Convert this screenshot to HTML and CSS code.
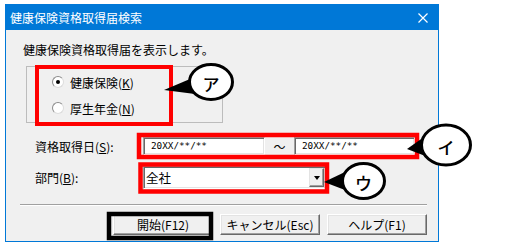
FILE: index.html
```html
<!DOCTYPE html>
<html lang="ja">
<head>
    <meta charset="UTF-8">
    <title>健康保険資格取得届検索</title>
    <link rel="stylesheet" href="styles.css">
</head>
<body>

<div class="window">
    <div class="titlebar">
        <span>健康保険資格取得届検索</span>
        <svg class="close" width="10" height="10" viewBox="0 0 10 10">
            <path d="M0.5 0.5 L9.5 9.5 M9.5 0.5 L0.5 9.5" stroke="#fff" stroke-width="1.2"/>
        </svg>
    </div>

    <div class="content">
        <p class="intro">健康保険資格取得届を表示します。</p>

        <div class="group">
            <label class="radio-row">
                <span class="radio checked"></span>
                <span>健康保険(<u>K</u>)</span>
            </label>
            <label class="radio-row">
                <span class="radio"></span>
                <span>厚生年金(<u>N</u>)</span>
            </label>
        </div>

        <div class="field-row date-row">
            <span class="field-label">資格取得日(<u>S</u>):</span>
            <div class="textbox date-from">20XX/**/**</div>
            <span class="tilde">～</span>
            <div class="textbox date-to">20XX/**/**</div>
        </div>

        <div class="field-row combo-row">
            <span class="field-label">部門(<u>B</u>):</span>
            <div class="combo">
                <span class="combo-text">全社</span>
                <span class="combo-btn"><span class="arrow"></span></span>
            </div>
        </div>

        <div class="separator"></div>

        <div class="buttons">
            <button class="btn">開始(F12)</button>
            <button class="btn">キャンセル(Esc)</button>
            <button class="btn">ヘルプ(F1)</button>
        </div>
    </div>
</div>

<!-- annotations drawn over the dialog -->
<svg class="annot" width="516" height="251" viewBox="0 0 516 251">
    <rect x="37" y="67" width="134" height="57" fill="none" stroke="#ff0000" stroke-width="4"/>
    <rect x="139" y="135" width="278" height="22" fill="none" stroke="#ff0000" stroke-width="4.5"/>
    <rect x="140.5" y="164.5" width="186.5" height="27" fill="none" stroke="#ff0000" stroke-width="4.5"/>
    <rect x="109" y="214" width="102" height="24" fill="none" stroke="#000" stroke-width="4.5"/>

    <g class="callout">
        <polygon points="164,90 190,79 195,94" fill="#000"/>
        <ellipse cx="211" cy="82" rx="21.5" ry="17.5" fill="#fff" stroke="#000" stroke-width="3"/>
        <text x="211" y="83">ア</text>
    </g>
    <g class="callout">
        <polygon points="407,149 424,137 428,157" fill="#000"/>
        <ellipse cx="446" cy="145" rx="24.5" ry="20" fill="#fff" stroke="#000" stroke-width="3"/>
        <text x="446" y="146">イ</text>
    </g>
    <g class="callout">
        <polygon points="324,182 345,172 345,190" fill="#000"/>
        <ellipse cx="363.5" cy="181" rx="21" ry="17.5" fill="#fff" stroke="#000" stroke-width="3"/>
        <text x="363.5" y="182">ウ</text>
    </g>
</svg>

</body>
</html>
```

FILE: styles.css
```css
body {
    margin: 0;
    background-color: #fff;
    font-family: "Noto Sans CJK JP", "Noto Sans", sans-serif;
    font-size: 12px;
    color: #000;
}
.window {
    margin: 4px 0 0 5px;
    width: 434px;
    height: 238px;
    box-sizing: border-box;
    border: 1px solid #0078d7;
    background-color: #f0f0f0;
}
.titlebar {
    height: 25px;
    padding: 0 10px 0 4px;
    display: flex;
    align-items: center;
    justify-content: space-between;
    background-color: #0078d7;
    color: #fff;
    font-size: 12px;
}
.content {
    padding-top: 12px;
}
.intro {
    margin: 0 0 0 17px;
    line-height: 16px;
}
.group {
    margin: 8px 0 0 20px;
    width: 197px;
    height: 57px;
    box-sizing: border-box;
    padding: 2px 0 0 25px;
    border: 1px solid #bcbcbc;
}
.radio-row {
    height: 26px;
    display: flex;
    align-items: center;
    gap: 6px;
}
.radio {
    width: 12px;
    height: 12px;
    box-sizing: border-box;
    border-radius: 50%;
    border: 1px solid #8c8c8c;
    border-right-color: #dcdcdc;
    border-bottom-color: #dcdcdc;
    background-color: #fff;
    position: relative;
}
.radio.checked::after {
    content: "";
    position: absolute;
    left: 3px;
    top: 3px;
    width: 4px;
    height: 4px;
    border-radius: 50%;
    background-color: #000;
}
.field-row {
    display: flex;
    align-items: center;
    margin-left: 29px;
}
.field-label {
    width: 108px;
}
.date-row {
    margin-top: 14px;
    height: 18px;
}
.textbox {
    height: 18px;
    box-sizing: border-box;
    padding-left: 7px;
    border: 1px solid;
    border-color: #a0a0a0 #fff #fff #a0a0a0;
    box-shadow: inset 1px 1px #696969, inset -1px -1px #e3e3e3;
    background-color: #fff;
    font-family: "DejaVu Sans Mono", monospace;
    font-size: 9.3px;
    line-height: 16px;
}
.date-from {
    width: 122px;
}
.date-to {
    width: 121px;
}
.tilde {
    width: 29px;
    text-align: center;
}
.combo-row {
    margin-top: 11px;
}
.combo {
    width: 183px;
    height: 23px;
    box-sizing: border-box;
    display: flex;
    align-items: center;
    padding: 1px;
    border: 1px solid;
    border-color: #a0a0a0 #fff #fff #a0a0a0;
    box-shadow: inset 1px 1px #696969, inset -1px -1px #e3e3e3;
    background-color: #fff;
}
.combo-text {
    flex: 1;
    padding-left: 1px;
    font-size: 12.5px;
}
.combo-btn {
    width: 15px;
    height: 19px;
    box-sizing: border-box;
    display: flex;
    align-items: center;
    justify-content: center;
    background-color: #f0f0f0;
    border: 1px solid;
    border-color: #e3e3e3 #696969 #696969 #e3e3e3;
    box-shadow: inset -1px -1px #a0a0a0;
}
.arrow {
    width: 0;
    height: 0;
    border-left: 3.5px solid transparent;
    border-right: 3.5px solid transparent;
    border-top: 4px solid #000;
}
.separator {
    margin: 15px 0 0 14px;
    width: 407px;
    border-top: 1px solid #a0a0a0;
    border-bottom: 1px solid #fff;
}
.buttons {
    margin-top: 8px;
    padding-right: 11px;
    display: flex;
    justify-content: flex-end;
    gap: 7px;
}
.btn {
    width: 100px;
    height: 21px;
    padding: 0;
    box-sizing: border-box;
    border: 1px solid;
    border-color: #fff #696969 #696969 #fff;
    box-shadow: inset -1px -1px #a0a0a0, inset 1px 1px #e3e3e3;
    background-color: #f0f0f0;
    font-family: "Noto Sans CJK JP", "Noto Sans", sans-serif;
    font-size: 12px;
    color: #000;
}
.annot {
    position: absolute;
    left: 0;
    top: 0;
    pointer-events: none;
}
.callout text {
    font-family: "Noto Sans CJK JP", sans-serif;
    font-size: 17px;
    font-weight: 500;
    text-anchor: middle;
    dominant-baseline: central;
}
```
